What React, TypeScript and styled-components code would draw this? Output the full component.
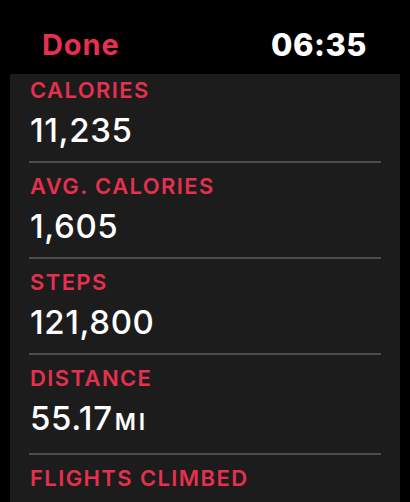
import styled, { createGlobalStyle } from 'styled-components'

const GlobalStyle = createGlobalStyle`
  html, body {
    margin: 0;
    padding: 0;
    background: #000;
  }
  body {
    font-family: Inter, "Noto Sans", "Liberation Sans", sans-serif;
    -webkit-font-smoothing: antialiased;
  }
`

const Screen = styled.div`
  width: 410px;
  height: 502px;
  overflow: hidden;
  background: #000;
  display: flex;
  flex-direction: column;
`

const Header = styled.header`
  height: 74px;
  flex-shrink: 0;
  display: flex;
  justify-content: space-between;
  align-items: flex-end;
  padding: 0 43px 0 42px;
  box-sizing: border-box;
`

const DoneButton = styled.button`
  background: none;
  border: none;
  padding: 0;
  margin-bottom: 12px;
  font-family: inherit;
  font-size: 29px;
  line-height: 34px;
  font-weight: 700;
  letter-spacing: 0.9px;
  color: #e5304f;
`

const Clock = styled.span`
  margin-bottom: 12px;
  font-size: 31px;
  line-height: 34px;
  font-weight: 800;
  letter-spacing: 0.5px;
  color: #fff;
`

const Panel = styled.section`
  flex: 1;
  margin: 0 10px;
  padding: 0 19px;
  background: #1c1c1c;
  overflow: hidden;
`

const Row = styled.div`
  padding-top: 10px;
  padding-bottom: 13px;
  border-bottom: 2px solid #4c4c4c;

  &:first-child {
    padding-top: 3px;
  }
`

const Label = styled.div`
  font-size: 22px;
  line-height: 26px;
  font-weight: 600;
  letter-spacing: 1.4px;
  color: #e5304f;
  padding-left: 1px;
`

const Value = styled.div`
  margin-top: 9px;
  font-size: 33px;
  line-height: 36px;
  font-weight: 500;
  letter-spacing: 0.6px;
  color: #fff;
  padding-left: 1px;
`

const Unit = styled.span`
  font-size: 23px;
  font-weight: 600;
  letter-spacing: 3px;
  margin-left: 2px;
`

const stats = [
  { label: 'CALORIES', value: '11,235' },
  { label: 'AVG. CALORIES', value: '1,605' },
  { label: 'STEPS', value: '121,800' },
  { label: 'DISTANCE', value: '55.17', unit: 'MI' },
  { label: 'FLIGHTS CLIMBED', value: '96' },
]

export default function App() {
  return (
    <Screen>
      <GlobalStyle />
      <Header>
        <DoneButton>Done</DoneButton>
        <Clock>06:35</Clock>
      </Header>
      <Panel>
        {stats.map((s) => (
          <Row key={s.label}>
            <Label>{s.label}</Label>
            <Value>
              {s.value}
              {s.unit && <Unit>{s.unit}</Unit>}
            </Value>
          </Row>
        ))}
      </Panel>
    </Screen>
  )
}
